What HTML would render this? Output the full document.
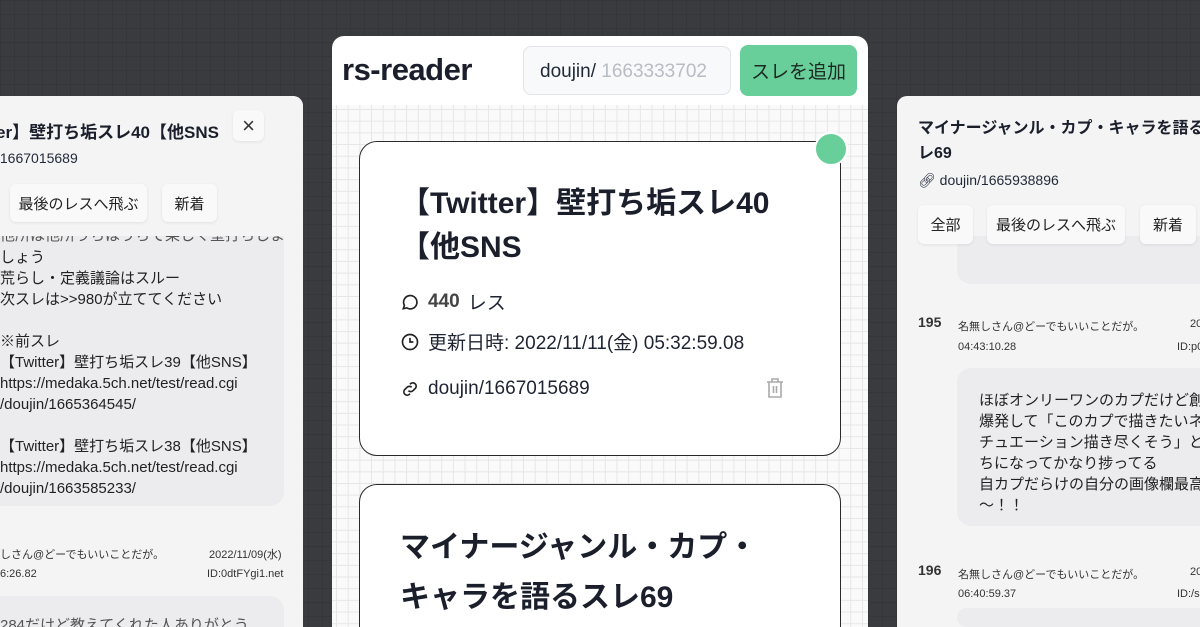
<!DOCTYPE html>
<html style="width:1200px;height:627px;overflow:hidden"><head><meta charset="utf-8"><style>
*{box-sizing:border-box;margin:0;padding:0}
body{width:1200px;height:627px;overflow:hidden;position:relative;font-family:"Liberation Sans","Noto Sans CJK JP",sans-serif;color:#1f2937;
background-color:#3a3b3f;background-image:linear-gradient(#35363a 1px,transparent 1px),linear-gradient(90deg,#35363a 1px,transparent 1px);background-size:14px 14px}
.abs{position:absolute;white-space:nowrap}
.side{position:absolute;top:96px;height:531px;background:#f4f4f5;border-radius:10px 10px 0 0;overflow:hidden}
.btn{position:absolute;z-index:2;background:#f9f9fa;border-radius:6px;box-shadow:0 1px 3px rgba(0,0,0,.08);font-size:15px;display:flex;align-items:center;justify-content:center;color:#222}
.bubble{position:absolute;background:#ececee;border-radius:14px}
.t{font-size:15px;color:#222;line-height:21px}
.s{font-size:11px;color:#333}
#center{position:absolute;left:332px;top:36px;width:536px;height:591px;background:#fff;border-radius:12px 12px 0 0;overflow:hidden}
#grid{position:absolute;left:0;top:69px;width:536px;height:522px;background-color:#fafafa;background-image:linear-gradient(#e6e6e6 1px,transparent 1px),linear-gradient(90deg,#e6e6e6 1px,transparent 1px);background-size:11.7px 11.7px;background-position:4px 4px}
.card{position:absolute;left:27px;width:482px;background:#fff;border:1.5px solid #2a2a2a;border-radius:18px}
.ctitle{position:absolute;left:40px;font-size:30px;font-weight:bold;line-height:44px;color:#1a1f2b;white-space:nowrap}
.row{position:absolute;left:40px;font-size:19px;color:#1f2433;display:flex;align-items:center;gap:8px;white-space:nowrap}
</style></head><body>

<!-- left panel -->
<div class="side" style="left:-20px;width:323px">
  <div class="bubble" style="left:-20px;top:120px;width:324px;height:290px"></div>
  <div class="abs t" style="left:20px;top:129px;color:#555">他所は他所うちはうちで楽しく壁打ちしま</div>
  <div class="abs" style="left:0;top:0;width:323px;height:140px;background:#f4f4f5"></div>
  <div class="abs" style="left:16px;top:22px;font-size:17px;font-weight:bold;color:#1a1f2b">er】壁打ち垢スレ40【他SNS</div>
  <div class="btn" style="left:253px;top:14px;width:31px;height:31px;font-size:22px;color:#333">×</div>
  <div class="abs" style="left:16px;top:54px;font-size:14px">/1667015689</div>
  <div class="btn" style="left:30px;top:88px;width:137px;height:38px">最後のレスへ飛ぶ</div>
  <div class="btn" style="left:182px;top:88px;width:55px;height:38px">新着</div>
  <div class="abs t" style="left:20px;top:151px">しょう<br>荒らし・定義議論はスルー<br>次スレは&gt;&gt;980が立ててください<br><br>※前スレ<br>【Twitter】壁打ち垢スレ39【他SNS】<br>https://medaka.5ch.net/test/read.cgi<br>/doujin/1665364545/<br><br>【Twitter】壁打ち垢スレ38【他SNS】<br>https://medaka.5ch.net/test/read.cgi<br>/doujin/1663585233/</div>
  <div class="abs s" style="left:20px;top:450px">しさん@どーでもいいことだが。</div>
  <div class="abs s" style="left:229px;top:450px">2022/11/09(水)</div>
  <div class="abs s" style="left:20px;top:472px">6:26.82</div>
  <div class="abs s" style="left:227px;top:472px">ID:0dtFYgi1.net</div>
  <div class="bubble" style="left:-20px;top:500px;width:324px;height:100px"></div>
  <div class="abs t" style="left:20px;top:519px;color:#555">284だけど教えてくれた人ありがとう</div>
</div>

<!-- right panel -->
<div class="side" style="left:897px;width:330px">
  <div class="bubble" style="left:60px;top:140px;width:280px;height:48px"></div>
  <div class="abs" style="left:21px;top:20px;font-size:16px;font-weight:bold;line-height:25px;color:#1a1f2b">マイナージャンル・カプ・キャラを語る<br>レ69</div>
  <div class="abs" style="left:21px;top:76px;font-size:14px">🔗︎ doujin/1665938896</div>
  <div class="btn" style="left:21px;top:109px;width:55px;height:39px">全部</div>
  <div class="btn" style="left:90px;top:109px;width:138px;height:39px">最後のレスへ飛ぶ</div>
  <div class="btn" style="left:243px;top:109px;width:56px;height:39px">新着</div>
  <div class="abs" style="left:21px;top:218px;font-size:14px;font-weight:bold;color:#333">195</div>
  <div class="abs s" style="left:61px;top:222px">名無しさん@どーでもいいことだが。</div>
  <div class="abs s" style="left:293px;top:222px">20</div>
  <div class="abs s" style="left:61px;top:245px">04:43:10.28</div>
  <div class="abs s" style="left:280px;top:245px">ID:p0</div>
  <div class="bubble" style="left:60px;top:272px;width:280px;height:158px"></div>
  <div class="abs t" style="left:82px;top:294px">ほぼオンリーワンのカプだけど創作意<br>爆発して「このカプで描きたいネタ<br>チュエーション描き尽くそう」とい<br>ちになってかなり捗ってる<br>自カプだらけの自分の画像欄最高～～<br>～！！</div>
  <div class="abs" style="left:21px;top:466px;font-size:14px;font-weight:bold;color:#333">196</div>
  <div class="abs s" style="left:61px;top:470px">名無しさん@どーでもいいことだが。</div>
  <div class="abs s" style="left:293px;top:470px">20</div>
  <div class="abs s" style="left:61px;top:492px">06:40:59.37</div>
  <div class="abs s" style="left:280px;top:492px">ID:/s</div>
  <div class="bubble" style="left:60px;top:512px;width:280px;height:19px"></div>
</div>

<!-- center -->
<div id="center">
  <div class="abs" style="left:10px;top:16px;font-size:31px;font-weight:bold;color:#1a1f2b;letter-spacing:-0.5px">rs-reader</div>
  <div class="abs" style="left:191px;top:10px;width:208px;height:49px;border:1px solid #e2e4e8;border-radius:8px;background:#f8f9fa;font-size:19px;padding:14px 0 0 16px">doujin/ <span style="color:#b8bcc4">1663333702</span></div>
  <div class="abs" style="left:408px;top:9px;width:117px;height:51px;background:#68cf9a;border-radius:8px;font-size:19px;color:#1d2a22;display:flex;align-items:center;justify-content:center">スレを追加</div>
  <div id="grid"></div>
  <div class="card" style="top:105px;height:315px">
    <div class="ctitle" style="top:40px">【Twitter】壁打ち垢スレ40<br>【他SNS</div>
    <div class="row" style="top:146px"><svg width="20" height="20" viewBox="0 0 24 24" fill="none" stroke="#222" stroke-width="2"><path d="M4 20l1.3-3.9A8 8 0 1 1 8 19z"/></svg><b style="color:#444">440</b> レス</div>
    <div class="row" style="top:186px"><svg width="20" height="20" viewBox="0 0 24 24" fill="none" stroke="#222" stroke-width="2"><circle cx="12" cy="12" r="9"/><path d="M12 7v5h4"/></svg>更新日時: 2022/11/11(金) 05:32:59.08</div>
    <div class="row" style="top:236px"><svg width="20" height="20" viewBox="0 0 24 24" fill="none" stroke="#222" stroke-width="2"><path d="M10 14a4 4 0 0 0 5.6 0l3-3a4 4 0 0 0-5.6-5.6l-1 1M14 10a4 4 0 0 0-5.6 0l-3 3a4 4 0 0 0 5.6 5.6l1-1"/></svg>doujin/1667015689</div>
    <svg class="abs" style="left:405px;top:235px" width="20" height="22" viewBox="0 0 20 22" fill="none" stroke="#aaa" stroke-width="1.6"><path d="M2 5h16M7 5V2h6v3M4 5v15h12V5M8.5 9v7M11.5 9v7"/></svg>
  </div>
  <div class="abs" style="left:482px;top:96px;width:34px;height:34px;border-radius:50%;background:#68cf9a;border:2.5px solid #fff"></div>
  <div class="card" style="top:448px;height:160px">
    <div class="ctitle" style="top:38px;line-height:50px">マイナージャンル・カプ・<br>キャラを語るスレ69</div>
  </div>
</div>
</body></html>
